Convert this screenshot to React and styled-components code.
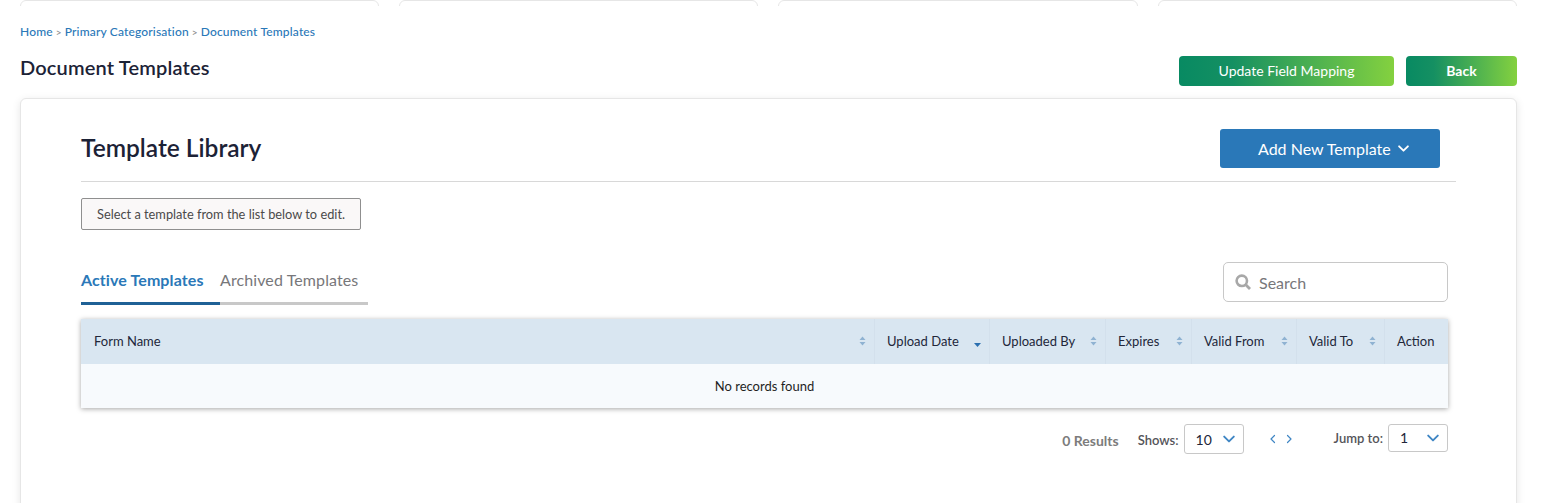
import styled, { createGlobalStyle } from 'styled-components';

const GlobalStyle = createGlobalStyle`
html, body {
    margin: 0;
    background: #fff;
    font-family: Lato, "Liberation Sans", sans-serif;
    overflow: hidden;
}
* { box-sizing: border-box; }
`;

const Page = styled.div`
width: 1553px;
height: 503px;
padding: 0 36px 0 20px;
overflow: hidden;
`;
const TopCards = styled.div`
display: grid;
grid-template-columns: 359px 359px 360px 359px;
column-gap: 20px;
height: 6px;
overflow: hidden;
align-items: end;
`;
const TopCard = styled.div`
height: 30px;
border: 1px solid #e6e6e6;
border-radius: 6px;
background: #fff;
`;
const Breadcrumb = styled.nav`
margin-top: 18px;
font-size: 12px;
line-height: 15px;
font-weight: 500;
letter-spacing: 0.16px;
color: #2a78b8;
span { color: #8a8a8a; margin: 0 3px; font-size: 10px; }
`;
const TitleRow = styled.div`
display: flex;
justify-content: space-between;
margin-top: 16px;
height: 42px;
`;
const PageTitle = styled.h1`
margin: -1px 0 0;
font-size: 20px;
line-height: 24px;
font-weight: 600;
letter-spacing: 0.16px;
color: #1c2236;
`;
const ButtonGroup = styled.div`
display: flex;
gap: 12px;
align-items: flex-start;
`;
const GreenButton = styled.button`
width: ${p => p.$width}px;
height: 30px;
padding: 0 0 2px;
border: 0;
border-radius: 4px;
background: linear-gradient(90deg, #088a62 0%, #159062 25%, #84d13f 100%);
color: #fff;
font-family: inherit;
font-size: 14px;
font-weight: ${p => (p.$bold ? 700 : 400)};
`;
const Card = styled.section`
height: 440px;
padding: 30px 60px 0 60px;
border: 1px solid #e6e6e6;
border-radius: 6px;
background: #fff;
box-shadow: 0 2px 8px rgba(0, 0, 0, 0.1);
`;
const CardHeader = styled.div`
display: flex;
justify-content: space-between;
align-items: center;
height: 53px;
padding: 0 16px 14px 0;
border-bottom: 1px solid #d8d8d8;
`;
const CardTitle = styled.h2`
margin: 0;
font-size: 24.5px;
font-weight: 600;
line-height: 38px;
color: #1c2236;
`;
const AddButton = styled.button`
display: flex;
align-items: center;
gap: 7px;
width: 220px;
height: 39px;
padding: 0 0 0 38px;
border: 0;
border-radius: 3px;
background: #2a78b8;
color: #fff;
font-family: inherit;
font-size: 16px;
`;
const Hint = styled.div`
width: 280px;
height: 32px;
margin-top: 16px;
border: 1px solid #8f8f8f;
border-radius: 2px;
background: #faf8f8;
color: #4a4a4a;
font-size: 12.8px;
line-height: 30px;
text-align: center;
`;
const TabsRow = styled.div`
display: flex;
justify-content: space-between;
align-items: flex-start;
width: 1367px;
margin-top: 32px;
`;
const Tabs = styled.div`
display: flex;
margin-top: 7px;
`;
const Tab = styled.div`
width: ${p => p.$width}px;
height: 36px;
border-bottom: 3px solid ${p => (p.$active ? '#1f6196' : '#c8c8c8')};
color: ${p => (p.$active ? '#2a78b8' : '#77777a')};
font-size: 16px;
font-weight: ${p => (p.$active ? 700 : 400)};
letter-spacing: 0.1px;
line-height: 21px;
`;
const SearchBox = styled.div`
display: flex;
align-items: center;
gap: 8px;
width: 225px;
height: 40px;
padding-left: 11px;
border: 1px solid #c8c8c8;
border-radius: 5px;
color: #77777a;
font-size: 16px;
`;
const Table = styled.div`
display: grid;
grid-template-columns: 793px 115px 116px 86px 105px 88px 64px;
width: 1367px;
margin-top: 14px;
box-shadow: 0 1px 5px rgba(0, 0, 0, 0.35);
`;
const HeadCell = styled.div`
display: flex;
align-items: center;
justify-content: space-between;
height: 45px;
padding: 0 8px 2px ${p => (p.$first ? 13 : 12)}px;
background: #d9e6f1;
border-left: ${p => (p.$first ? '0' : '1px solid #d3e0ec')};
color: #22263a;
font-size: 13px;
`;
const EmptyRow = styled.div`
grid-column: 1 / -1;
height: 44px;
background: #f7fafd;
color: #1f1f1f;
font-size: 13px;
line-height: 44px;
text-align: center;
`;
const Pagination = styled.div`
display: flex;
align-items: center;
justify-content: flex-end;
width: 1367px;
height: 30px;
margin-top: 16px;
font-size: 13px;
color: #55555a;
`;
const Results = styled.span`
margin: 2px 19px 0 0;
font-size: 14px;
font-weight: 700;
color: #7c7c7c;
`;
const PagerLabel = styled.span`
margin: ${p => (p.$raised ? '0 5px 3px 0' : '2px 5px 0 0')};
font-weight: 600;
`;
const SelectBox = styled.div`
display: flex;
align-items: center;
justify-content: space-between;
width: 60px;
height: ${p => p.$height}px;
margin-bottom: ${p => (p.$raised ? 3 : 0)}px;
padding: 0 8px 0 11px;
border: 1px solid #c8c8c8;
border-radius: 3px;
color: #22263a;
font-size: 14px;
`;
const Arrows = styled.div`
display: flex;
gap: 6px;
margin: 0 40px 0 24px;
`;

const columns = ['Form Name', 'Upload Date', 'Uploaded By', 'Expires', 'Valid From', 'Valid To', 'Action'];

function Chevron({ dir = 'down', size = 10, color = '#3f86c4', width = 1.6 }) {
    const d = {
        down: 'M1 3l4 4 4-4',
        left: 'M6.5 1.5L3 5l3.5 3.5',
        right: 'M3.5 1.5L7 5 3.5 8.5',
    }[dir];
    return (
        <svg width={size} height={size} viewBox="0 0 10 10" fill="none">
            <path d={d} stroke={color} strokeWidth={width} strokeLinecap="round" strokeLinejoin="round" />
        </svg>
    );
}

function SortIcon({ active }) {
    // the sorted column only shows its lower, darker arrow
    if (active) {
        return (
            <svg width="7" height="14" viewBox="0 0 7 14">
                <path d="M0 9h7L3.5 13z" fill="#2a6fb0" />
            </svg>
        );
    }
    return (
        <svg width="7" height="10" viewBox="0 0 7 10">
            <path d="M3.5 0.5L6.5 4h-6zM3.5 9.5L0.5 6h6z" fill="#8fb2d2" />
        </svg>
    );
}

function App() {
    return (
        <Page>
            <GlobalStyle />
            <TopCards>
                <TopCard />
                <TopCard />
                <TopCard />
                <TopCard />
            </TopCards>
            <Breadcrumb>
                Home<span>&gt;</span>Primary Categorisation<span>&gt;</span>Document Templates
            </Breadcrumb>
            <TitleRow>
                <PageTitle>Document Templates</PageTitle>
                <ButtonGroup>
                    <GreenButton $width={215}>Update Field Mapping</GreenButton>
                    <GreenButton $width={111} $bold>Back</GreenButton>
                </ButtonGroup>
            </TitleRow>
            <Card>
                <CardHeader>
                    <CardTitle>Template Library</CardTitle>
                    <AddButton>
                        Add New Template
                        <Chevron size={11} color="#fff" width={1.7} />
                    </AddButton>
                </CardHeader>
                <Hint>Select a template from the list below to edit.</Hint>
                <TabsRow>
                    <Tabs>
                        <Tab $active $width={139}>Active Templates</Tab>
                        <Tab $width={148}>Archived Templates</Tab>
                    </Tabs>
                    <SearchBox>
                        <svg width="16" height="16" viewBox="0 0 16 16" fill="none">
                            <circle cx="6.8" cy="6.8" r="5.2" stroke="#a8a8a8" strokeWidth="2.6" />
                            <path d="M10.8 10.8L15 15" stroke="#a8a8a8" strokeWidth="2.8" />
                        </svg>
                        Search
                    </SearchBox>
                </TabsRow>
                <Table>
                    {columns.map((name, i) => (
                        <HeadCell key={name} $first={i === 0}>
                            {name}
                            {name !== 'Action' && <SortIcon active={name === 'Upload Date'} />}
                        </HeadCell>
                    ))}
                    <EmptyRow>No records found</EmptyRow>
                </Table>
                <Pagination>
                    <Results>0 Results</Results>
                    <PagerLabel>Shows:</PagerLabel>
                    <SelectBox $height={30}>
                        10
                        <Chevron size={12} />
                    </SelectBox>
                    <Arrows>
                        <Chevron dir="left" size={10} width={1.2} />
                        <Chevron dir="right" size={10} width={1.2} />
                    </Arrows>
                    <PagerLabel $raised>Jump to:</PagerLabel>
                    <SelectBox $height={28} $raised>
                        1
                        <Chevron size={12} />
                    </SelectBox>
                </Pagination>
            </Card>
        </Page>
    );
}

export default App;
